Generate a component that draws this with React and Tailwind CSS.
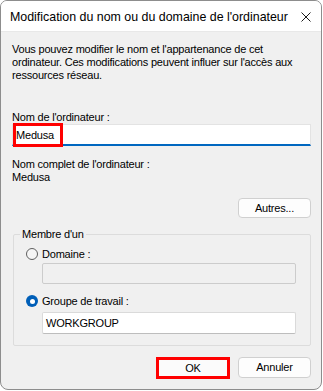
import React from "react";

const font = { fontFamily: '"Liberation Sans", Arial, sans-serif' };

const Radio = ({ checked }) =>
  checked ? (
    <span className="w-[12px] h-[12px] rounded-full bg-[#005fb8] flex items-center justify-center shrink-0">
      <span className="w-[5px] h-[5px] rounded-full bg-white" />
    </span>
  ) : (
    <span className="w-[12px] h-[12px] rounded-full border border-[#5f5f5f] bg-[#f5f5f5] shrink-0" />
  );

const App = () => {
  return (
    <div className="w-[323px] h-[391px] bg-white text-black" style={font}>
      <div className="w-[322px] h-[390px] border border-[#8d8d8d] rounded-b-[8px] rounded-t-[7px] bg-[#f0f0f0] flex flex-col overflow-hidden">
        {/* title bar */}
        <div className="h-[31px] bg-white border-b border-[#e8e8e8] flex items-center justify-between pl-[9px] pr-[10px] shrink-0">
          <span className="text-[12.4px] leading-[14px] mt-[1px]">Modification du nom ou du domaine de l'ordinateur</span>
          <svg width="10" height="10" viewBox="0 0 10 10" className="mt-[1px]">
            <path d="M0.5 0.5 L9.5 9.5 M9.5 0.5 L0.5 9.5" stroke="#1b1b1b" strokeWidth="1" />
          </svg>
        </div>

        {/* body */}
        <div className="flex-1 flex flex-col pl-[11px] pr-[10px] text-[11px] leading-[13px] tracking-[-0.2px]">
          <p className="mt-[11px]">
            Vous pouvez modifier le nom et l'appartenance de cet
            <br />
            ordinateur. Ces modifications peuvent influer sur l'accès aux
            <br />
            ressources réseau.
          </p>

          <div className="mt-[29px]">Nom de l'ordinateur :</div>
          <div className="relative h-[22px] bg-white border border-[#e3e3e3] border-b-2 border-b-[#0067c0] flex items-center pl-[3px]">
            <span className="mt-[1px]">Medusa</span>
            <div className="absolute left-0 -top-[2px] w-[50px] h-[24px] border-[3px] border-[#ff0000]" />
          </div>

          <div className="mt-[12px]">Nom complet de l'ordinateur :</div>
          <div>Medusa</div>

          <div className="flex justify-end mt-[14px]">
            <button className="w-[73px] h-[20px] rounded-[4px] border border-[#d0d0d0] bg-[#fdfdfd] text-[11px] leading-[13px]">
              Autres...
            </button>
          </div>

          <fieldset className="mt-[10px] ml-[1px] p-0 pb-[11px] border border-[#dcdcdc] rounded-[2px]">
            <legend className="ml-[6px] px-[2px] leading-[13px]">Membre d'un</legend>
            <div className="flex items-center gap-[4px] h-[14px] mt-[6px] pl-[12px]">
              <Radio checked={false} />
              <span>Domaine :</span>
            </div>
            <div className="ml-[28px] mt-[2px] w-[254px] h-[21px] rounded-[2px] border border-[#cccccc] bg-[#f0f0f0]" />
            <div className="flex items-center gap-[4px] h-[14px] mt-[10px] pl-[12px]">
              <Radio checked />
              <span>Groupe de travail :</span>
            </div>
            <div className="ml-[28px] mt-[4px] w-[254px] h-[22px] rounded-[2px] border border-[#dadada] border-b-[#bdbdbd] bg-white flex items-center pl-[3px]">
              <span>WORKGROUP</span>
            </div>
          </fieldset>

          <div className="flex justify-end items-start gap-[8px] mt-[11px]">
            <button className="w-[74px] h-[22px] border-[3px] border-[#ff0000] bg-[#fbfbfb] text-[11px] leading-[13px]">
              OK
            </button>
            <button className="w-[73px] h-[21px] rounded-[4px] border border-[#d0d0d0] bg-[#fdfdfd] text-[11px] leading-[13px]">
              Annuler
            </button>
          </div>
        </div>
      </div>
    </div>
  );
};

export default App;
